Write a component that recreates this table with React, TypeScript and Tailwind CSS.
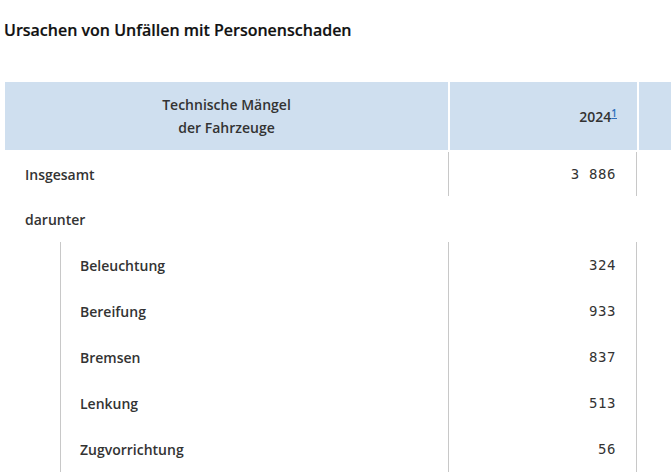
const rows = [
  { label: "Beleuchtung", value: "324" },
  { label: "Bereifung", value: "933" },
  { label: "Bremsen", value: "837" },
  { label: "Lenkung", value: "513" },
  { label: "Zugvorrichtung", value: "56" },
];

const sans = "[font-family:'Open_Sans','Lato',sans-serif]";
const mono = "font-['DejaVu_Sans_Mono','Liberation_Mono',monospace]";

export default function App() {
  return (
    <div className={`w-[671px] h-[472px] overflow-hidden bg-white ${sans} text-[#333]`}>
      <h1 className="pt-[19px] pl-[4px] text-[16px] font-semibold leading-[22px] text-[#111] [-webkit-text-stroke:0.2px_#111]">
        Ursachen von Unfällen mit Personenschaden
      </h1>

      <div className="mt-[41px] ml-[5px] w-[720px] text-[14px] font-semibold">
        {/* Header */}
        <div className="flex h-[68px] bg-[#cfdfef]">
          <div className="w-[443px] flex items-center justify-center text-center leading-[23px]">
            <span>
              Technische Mängel
              <br />
              der Fahrzeuge
            </span>
          </div>
          <div className="w-[189px] border-l-2 border-white flex items-center justify-end pr-[20px]">
            <span>
              2024
              <sup className="text-[10px] text-[#2a6ebb] underline">1</sup>
            </span>
          </div>
          <div className="flex-1 border-l-2 border-white" />
        </div>

        {/* Insgesamt */}
        <div className="flex h-[46px] pt-[2px]">
          <div className="w-[443px] pl-[20px] flex items-center">Insgesamt</div>
          <div className={`w-[189px] border-x border-[#c8c8c8] flex items-center justify-end pr-[20px] ${mono} text-[14px] tracking-[0.6px] font-normal`}>
            3 886
          </div>
        </div>

        {/* darunter */}
        <div className="flex h-[46px] items-center pl-[20px]">darunter</div>

        {/* Sub rows */}
        {rows.map((r) => (
          <div key={r.label} className="flex h-[46px]">
            <div className="w-[55px]" />
            <div className="w-[388px] border-l border-[#c8c8c8] pl-[19px] flex items-center">{r.label}</div>
            <div className={`w-[189px] border-x border-[#c8c8c8] flex items-center justify-end pr-[20px] ${mono} text-[14px] tracking-[0.6px] font-normal`}>
              {r.value}
            </div>
          </div>
        ))}
      </div>
    </div>
  );
}
